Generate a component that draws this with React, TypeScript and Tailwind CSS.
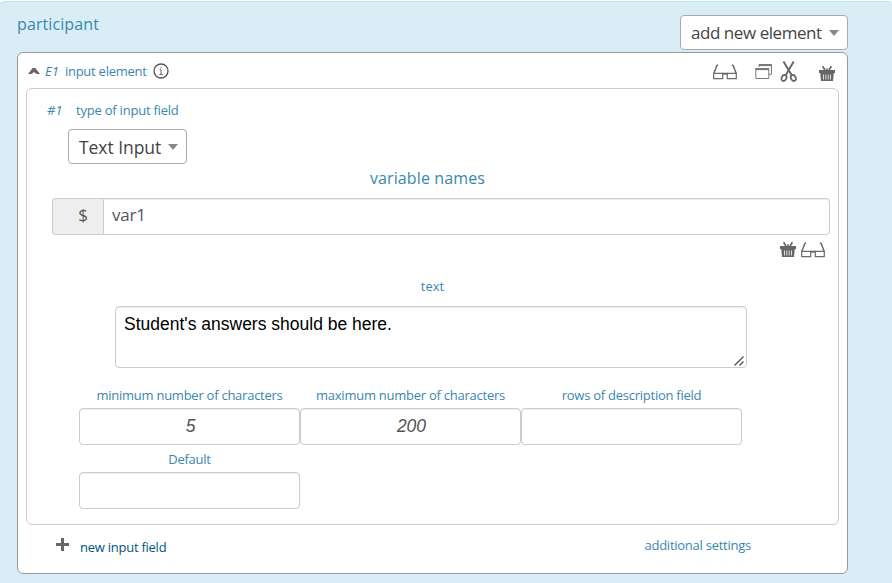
import type { ReactNode } from "react";

function Glasses() {
  return (
    <svg width="24" height="16" viewBox="0 0 24 16" fill="none" stroke="#6b6b6b" strokeWidth="1.2">
      <path d="M5 .8 3.8 1.6 .8 9.6M19 .8l1.2.8 3 8" strokeWidth="1.5" />
      <path d="M.7 9.3H9.7V14.7H.7zM14.3 9.3h9v5.4h-9z" />
      <path d="M9.5 9.7h5" strokeWidth="2" />
    </svg>
  );
}

function Basket() {
  return (
    <svg width="16" height="17" viewBox="0 0 16 17" fill="none" stroke="#666">
      <path d="M3.6 1.2 6 5M12.4 1.2 10 5M8 3.6V5" strokeWidth="1.7" />
      <path d="M0 5h16v3H0z" fill="#666" stroke="none" />
      <path d="M1.2 8h13.6l-.8 8H2z" fill="#666" stroke="none" />
      <path d="M4.5 9.5v5M6.8 9.5v5M9.2 9.5v5M11.5 9.5v5" stroke="#ddd" strokeWidth="1" />
    </svg>
  );
}

function Windows() {
  return (
    <svg width="18" height="17" viewBox="0 0 18 17" fill="none" stroke="#7a7a7a">
      <path d="M4 4V1.5h12.5v9.8h-2.6" />
      <path d="M4 2.2h12.5" strokeWidth="1.8" />
      <path d="M.8 5.5h13v10H.8z" />
      <path d="M.8 6.2h13" strokeWidth="1.8" />
    </svg>
  );
}

function ScissorsIcon() {
  return (
    <svg width="18" height="21" viewBox="0 0 18 21" fill="none" stroke="#666">
      <path d="M3.5.5 11.6 14M13.7.5 5.8 14" strokeWidth="1.9" />
      <ellipse cx="4" cy="17" rx="2.3" ry="3.1" transform="rotate(28 4 17)" strokeWidth="1.8" />
      <ellipse cx="13.3" cy="17" rx="2.3" ry="3.1" transform="rotate(-28 13.3 17)" strokeWidth="1.8" />
    </svg>
  );
}

function Caret() {
  return (
    <svg width="10" height="6" viewBox="0 0 10 6" fill="#888">
      <path d="M0 0h10L5 6z" />
    </svg>
  );
}

function SelectButton({ children, className }: { children: ReactNode; className: string }) {
  return (
    <button
      className={`flex h-[35px] items-center justify-between rounded-[4px] border border-[#aaa] bg-white pr-2 pl-[10px] whitespace-nowrap text-[#444] ${className}`}
    >
      {children}
      <Caret />
    </button>
  );
}

const field = "border border-[#ccc] rounded-[4px] bg-white shadow-[inset_0_1px_1px_rgba(0,0,0,0.075)]";
const small = "text-[13px] tracking-[-0.25px] whitespace-nowrap";

function NumberField({ label, value = "" }: { label: string; value?: string }) {
  return (
    <div className="w-[221px]">
      <div className={`h-[26px] text-center leading-[26px] ${small}`}>{label}</div>
      <input
        className={`${field} block h-[37px] w-full pb-px pl-[2px] text-center font-['Liberation_Sans',sans-serif] text-[17.5px] text-[#555] italic`}
        defaultValue={value}
      />
    </div>
  );
}

export default function App() {
  return (
    <div className="h-[583px] overflow-hidden bg-white pt-px font-['Open_Sans',sans-serif] text-[#3a87ad]">
      <div className="h-[590px] rounded-[4px] border-t border-[#bce8f1] bg-[#d9edf7] pl-[17px]">
        <div className="flex h-[50px] w-[831px] items-start justify-between pt-[13px]">
          <div className="-mt-[3px] text-[16px] leading-6 tracking-[0.1px]">participant</div>
          <SelectButton className="w-[168px] text-[17px] tracking-[-0.45px]">
            <span>add new element</span>
          </SelectButton>
        </div>

        <div className="h-[522px] w-[831px] rounded-[6px] border border-[#999] bg-white px-2">
          <div className="flex h-[35px] items-start justify-between pr-[4px] pl-[2px]">
            <div className="flex h-[37px] items-center">
              <svg className="-mt-px" width="12" height="7" viewBox="0 0 12 7" fill="#666">
                <path d="M4.7 0h2.6L12 6H8.6L6 4 3.4 6H0z" />
              </svg>
              <span className="ml-[5px] text-[13px] italic">E1</span>
              <span className={`ml-[6px] ${small}`}>input element</span>
              <svg className="-mt-px ml-[6px]" width="16" height="16" viewBox="0 0 16 16" fill="none" stroke="#555">
                <circle cx="8" cy="8" r="7" strokeWidth="1.3" />
                <path d="M6.5 6.7H8v4.6M6.3 11.5h3.4M8 4v1.3" strokeWidth=".9" />
              </svg>
            </div>
            <div className="flex items-start pt-[8px]">
              <div className="pt-[3px]"><Glasses /></div>
              <div className="ml-[18px] pt-[2px]"><Windows /></div>
              <div className="ml-[7px]"><ScissorsIcon /></div>
              <div className="mr-[0.5px] ml-[20.5px] pt-[4px]"><Basket /></div>
            </div>
          </div>

          <div className="h-[437px] rounded-[6px] border border-[#ccc] pt-[12px]">
            <div className="flex h-[19px] items-center pl-5 text-[13px]">
              <span className="w-[29px] italic">#1</span>
              <span className="text-[13px] tracking-[-0.22px]">type of input field</span>
            </div>
            <SelectButton className="mt-[9px] ml-[41px] w-[119px] text-[17.5px]">
              <span className="pt-[2px] tracking-[-0.05px]">Text Input</span>
            </SelectButton>
            <div className="h-[34px] pr-[10px] text-center text-[16px] leading-[29px] tracking-[0.12px]">variable names</div>

            <div className="mr-2 ml-[25px] flex h-[37px] text-[17px] text-[#555]">
              <span className="flex w-[51px] items-center justify-end rounded-l-[4px] border border-r-0 border-[#ccc] bg-[#eee] pr-[15px] pb-[3px]">
                $
              </span>
              <input className={`${field} min-w-0 flex-1 rounded-l-none pb-[3px] pl-2 tracking-[-0.2px]`} defaultValue="var1" />
            </div>
            <div className="flex h-[36px] justify-end gap-[5px] pt-[6px] pr-[13.5px]">
              <Basket />
              <div className="pt-px"><Glasses /></div>
            </div>
            <div className="h-[35px] text-center text-[13px] leading-[30px]">text</div>

            <div className="relative ml-[88px] h-[62px] w-[632px]">
              <textarea
                className={`${field} block h-full w-full resize-none px-2 pt-1 font-['Liberation_Sans',sans-serif] text-[17.5px] leading-[26px] text-black`}
                defaultValue="Student's answers should be here."
              />
              <svg className="absolute right-[3px] bottom-[2px]" width="10" height="10" viewBox="0 0 10 10" fill="none" stroke="#555" strokeWidth="1.4">
                <path d="M.5 9.5l9-9M5.5 9.5l4-4" />
              </svg>
            </div>

            <div className="mt-[14px] ml-[52px] flex">
              <NumberField label="minimum number of characters" value="5" />
              <NumberField label="maximum number of characters" value="200" />
              <NumberField label="rows of description field" />
            </div>
            <div className="mt-px ml-[52px]">
              <NumberField label="Default" />
            </div>
          </div>

          <div className={`flex h-[46px] justify-between pr-[88px] pl-[30px] ${small}`}>
            <div className="flex h-[45px] items-center text-[#005580]">
              <svg className="-mt-[6px]" width="13" height="13" viewBox="0 0 13 13" fill="#666">
                <path d="M5 0h3v5h5v3H8v5H5V8H0V5h5z" />
              </svg>
              <span className="ml-[11px]">new input field</span>
            </div>
            <span className="leading-[41px]">additional settings</span>
          </div>
        </div>
      </div>
    </div>
  );
}
